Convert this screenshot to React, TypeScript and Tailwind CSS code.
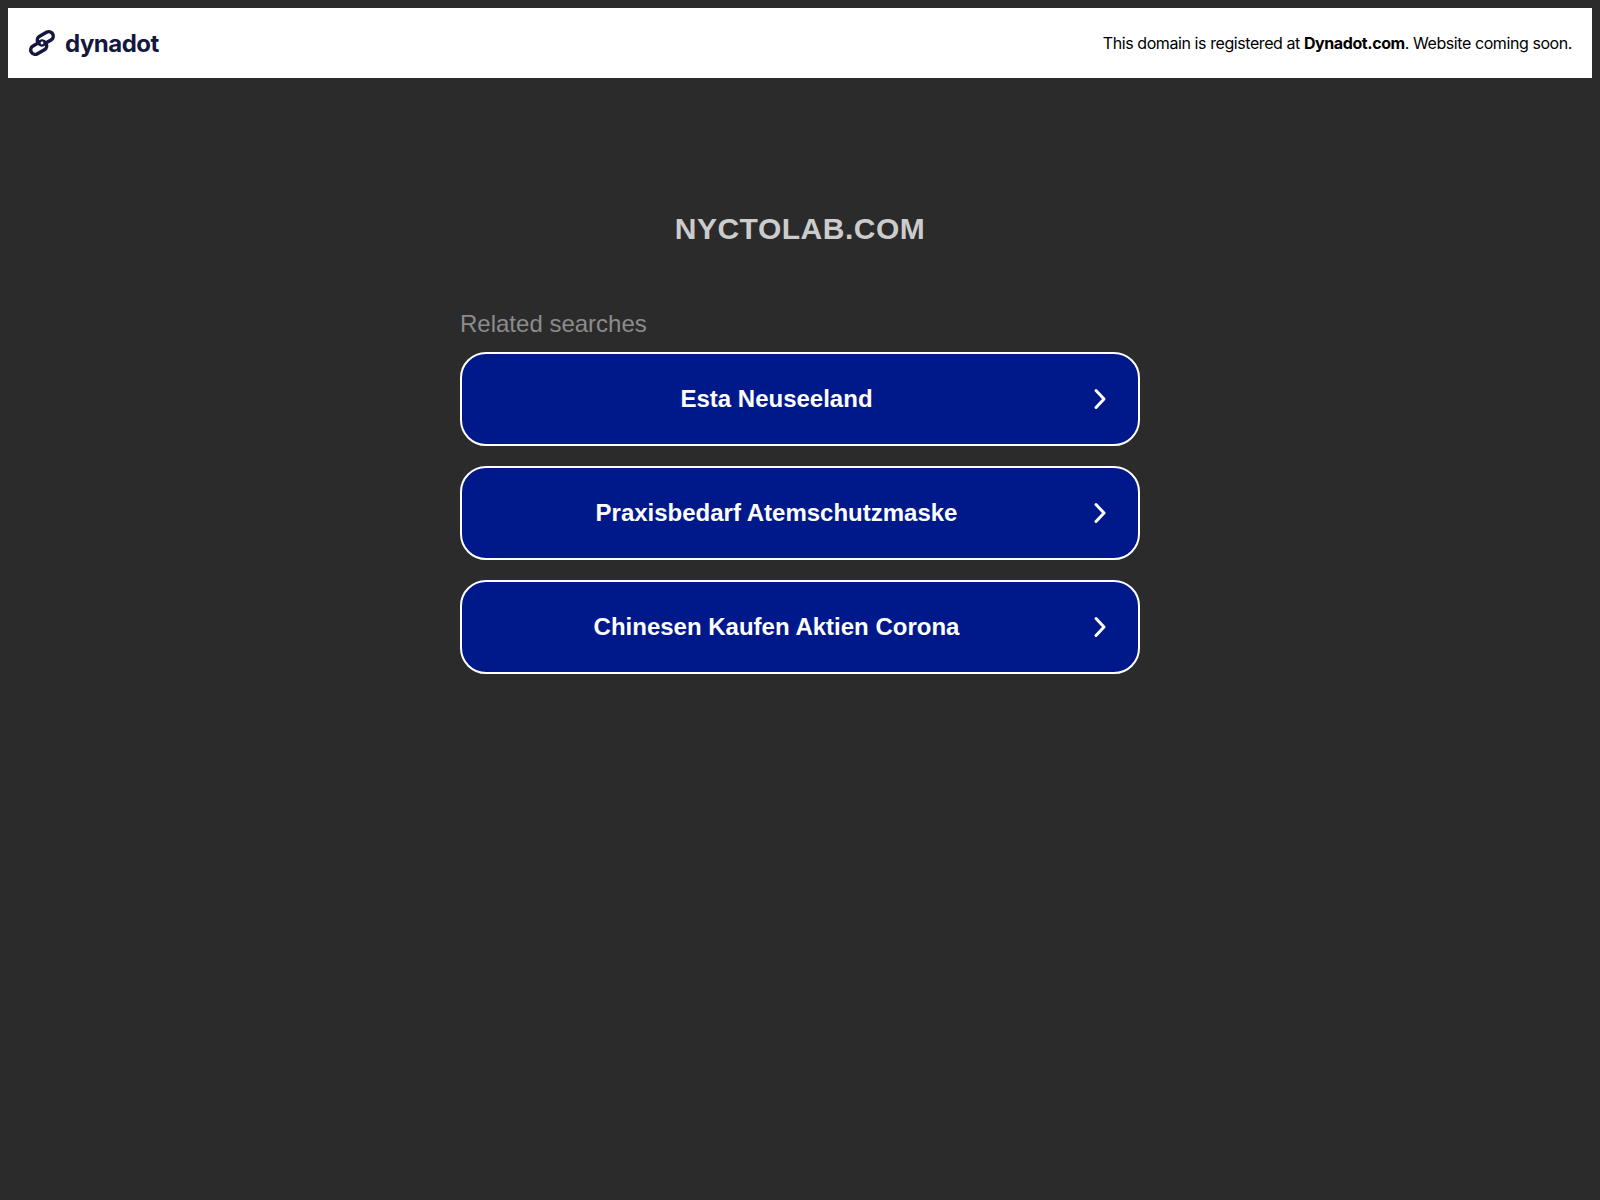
import React from "react";

const searches = ["Esta Neuseeland", "Praxisbedarf Atemschutzmaske", "Chinesen Kaufen Aktien Corona"];

function DynadotLogo() {
  return (
    <svg width="30" height="30" viewBox="0 0 30 30" fill="none" stroke="#14183e" strokeWidth="3.5">
      <rect x="9.8" y="5.7" width="17" height="9" rx="4.5" transform="rotate(-30 18.3 10.2)" />
      <rect x="3.2" y="15.3" width="17" height="9" rx="4.5" transform="rotate(-30 11.7 19.8)" />
      <circle cx="15" cy="15" r="2.4" strokeWidth="2" fill="white" />
    </svg>
  );
}

function SearchRow({ label }: { label: string }) {
  return (
    <a className="flex h-[94px] w-full items-center rounded-[26px] border-2 border-white bg-[#00198a] text-white">
      <span className="flex-1 pl-[16px] pr-[18px] text-center text-[24px] font-bold">{label}</span>
      <svg className="mr-[29px]" width="16" height="24" viewBox="0 0 16 24" fill="none" stroke="white" strokeWidth="3" strokeLinecap="round" strokeLinejoin="round">
        <path d="M3 3.5l8 8.5-8 8.5" />
      </svg>
    </a>
  );
}

export default function App() {
  return (
    <div className="min-h-[1200px] bg-[#2b2b2b] p-2 font-['Liberation_Sans',Arial,sans-serif]">
      <header className="flex h-[70px] items-center justify-between bg-white pl-[19px] pr-[20px] font-['Inter',sans-serif]">
        <div className="flex items-center gap-[8px]">
          <DynadotLogo />
          <span className="pt-[1px] text-[24px] font-bold tracking-[-0.5px] text-[#14183e]">dynadot</span>
        </div>
        <p className="text-[16px] tracking-[-0.42px] text-black">
          This domain is registered at <b>Dynadot.com</b>. Website coming soon.
        </p>
      </header>
      <main className="mx-auto flex w-[680px] flex-col pt-[128px]">
        <h1 className="text-center text-[30px] font-bold tracking-[0.5px] text-[#cccccc]">NYCTOLAB.COM</h1>
        <h2 className="mt-[55px] mb-[10px] text-[24px] text-[#8c8c8c]">Related searches</h2>
        <div className="flex flex-col gap-[20px]">
          {searches.map((s) => (
            <SearchRow key={s} label={s} />
          ))}
        </div>
      </main>
    </div>
  );
}
